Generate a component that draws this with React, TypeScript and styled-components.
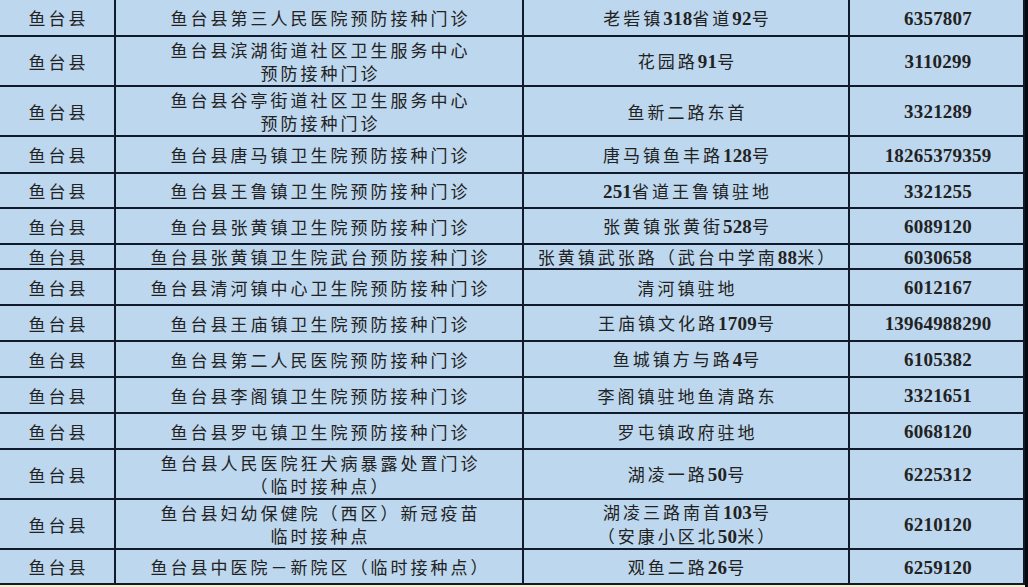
import React from 'react'
import styled, { createGlobalStyle } from 'styled-components'

type Row = {
  h: number
  name: string | string[]
  addr: string | string[]
  tel: string
}

const rows: Row[] = [
  { h: 35, name: '鱼台县第三人民医院预防接种门诊', addr: '老砦镇318省道92号', tel: '6357807' },
  { h: 48, name: ['鱼台县滨湖街道社区卫生服务中心', '预防接种门诊'], addr: '花园路91号', tel: '3110299' },
  { h: 48, name: ['鱼台县谷亭街道社区卫生服务中心', '预防接种门诊'], addr: '鱼新二路东首', tel: '3321289' },
  { h: 35, name: '鱼台县唐马镇卫生院预防接种门诊', addr: '唐马镇鱼丰路128号', tel: '18265379359' },
  { h: 33, name: '鱼台县王鲁镇卫生院预防接种门诊', addr: '251省道王鲁镇驻地', tel: '3321255' },
  { h: 34, name: '鱼台县张黄镇卫生院预防接种门诊', addr: '张黄镇张黄街528号', tel: '6089120' },
  { h: 23, name: '鱼台县张黄镇卫生院武台预防接种门诊', addr: '张黄镇武张路（武台中学南88米）', tel: '6030658' },
  { h: 34, name: '鱼台县清河镇中心卫生院预防接种门诊', addr: '清河镇驻地', tel: '6012167' },
  { h: 34, name: '鱼台县王庙镇卫生院预防接种门诊', addr: '王庙镇文化路1709号', tel: '13964988290' },
  { h: 34, name: '鱼台县第二人民医院预防接种门诊', addr: '鱼城镇方与路4号', tel: '6105382' },
  { h: 34, name: '鱼台县李阁镇卫生院预防接种门诊', addr: '李阁镇驻地鱼清路东', tel: '3321651' },
  { h: 34, name: '鱼台县罗屯镇卫生院预防接种门诊', addr: '罗屯镇政府驻地', tel: '6068120' },
  { h: 48, name: ['鱼台县人民医院狂犬病暴露处置门诊', '（临时接种点）'], addr: '湖凌一路50号', tel: '6225312' },
  { h: 48, name: ['鱼台县妇幼保健院（西区）新冠疫苗', '临时接种点'], addr: ['湖凌三路南首103号', '（安康小区北50米）'], tel: '6210120' },
  { h: 33, name: '鱼台县中医院－新院区（临时接种点）', addr: '观鱼二路26号', tel: '6259120' },
]

// digits are set in a bold serif, the chinese in the cjk face
const renderText = (text: string) =>
  text.split(/(\d+)/).map((part, i) =>
    /^\d+$/.test(part) ? <Num key={i}>{part}</Num> : <span key={i}>{part}</span>
  )

const renderLines = (value: string | string[]) => {
  const lines = Array.isArray(value) ? value : [value]
  return lines.map((line, i) => <Line key={i}>{renderText(line)}</Line>)
}

const App: React.FC = () => {
  return (
    <>
      <GlobalStyle />
      <Page>
        <Sheet>
          <Table>
            {rows.map((row, i) => (
              <TableRow key={i} $h={row.h}>
                <Cell>{renderLines('鱼台县')}</Cell>
                <Cell>{renderLines(row.name)}</Cell>
                <Cell>{renderLines(row.addr)}</Cell>
                <Cell>
                  <Line>
                    <Num>{row.tel}</Num>
                  </Line>
                </Cell>
              </TableRow>
            ))}
          </Table>
          <NextRow />
        </Sheet>
        <Edge />
      </Page>
    </>
  )
}

const GlobalStyle = createGlobalStyle`
    html, body {
        margin: 0;
        padding: 0;
        background: #0a0d14;
        overflow: hidden;
    }
`

const Page = styled.div`
    display: flex;
    width: 1028px;
    height: 587px;
`

const Sheet = styled.div`
    width: 1025px;
    display: flex;
    flex-direction: column;
`

const Table = styled.div`
    display: flex;
    flex-direction: column;
    gap: 2px;
    background: #111a2b;
    padding: 0 2px 2px 0;
`

const TableRow = styled.div<{ $h: number }>`
    display: grid;
    grid-template-columns: 114px 406px 324px 173px;
    column-gap: 2px;
    height: ${(props) => props.$h}px;
`

const Cell = styled.div`
    background: #bdd7ee;
    display: flex;
    flex-direction: column;
    align-items: center;
    justify-content: center;
    overflow: hidden;
    padding-left: 3px;
    color: #222;
    font-family: "Noto Sans CJK SC", "Liberation Serif", serif;
    font-size: 17px;
    font-weight: 400;
    letter-spacing: 3px;
    white-space: nowrap;
`

const Line = styled.div`
    line-height: 23px;
`

const Num = styled.span`
    font-family: "Liberation Serif", serif;
    font-weight: 700;
    font-size: 19px;
    letter-spacing: 0.2px;
`

const NextRow = styled.div`
    flex: 1;
    background: #f2efc9;
`

const Edge = styled.div`
    flex: 1;
    background: #07090e;
`

export default App
